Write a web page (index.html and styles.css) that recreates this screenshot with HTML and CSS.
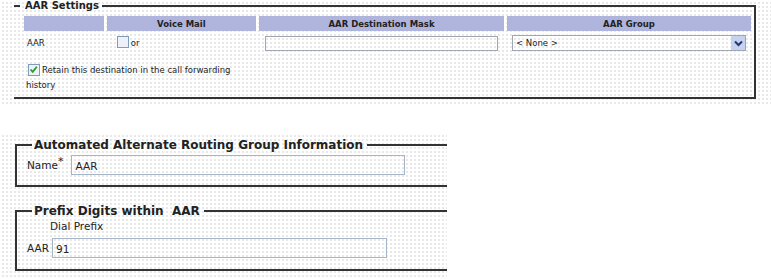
FILE: index.html
```html
<!DOCTYPE html>
<html lang="en">
<head>
    <meta charset="UTF-8">
    <title>AAR Settings</title>
    <link rel="stylesheet" href="styles.css">
</head>
<body>
    <div class="panel top">
        <fieldset class="aar">
            <legend>AAR Settings</legend>
            <table>
                <thead>
                    <tr>
                        <th class="c1"></th>
                        <th class="c2">Voice Mail</th>
                        <th class="c3">AAR Destination Mask</th>
                        <th class="c4">AAR Group</th>
                    </tr>
                </thead>
                <tbody>
                    <tr>
                        <td>AAR</td>
                        <td class="vm"><span class="box"></span>or</td>
                        <td><input type="text" class="mask"></td>
                        <td>
                            <div class="select">
                                <span>&lt; None &gt;</span>
                                <span class="arrow"><svg width="9" height="7" viewBox="0 0 9 7"><path d="M1 1.5 L4.5 5 L8 1.5" fill="none" stroke="#28346b" stroke-width="2"/></svg></span>
                            </div>
                        </td>
                    </tr>
                </tbody>
            </table>
            <div class="retain">
                <span class="box checked"><svg width="9" height="9" viewBox="0 0 9 9"><path d="M1.5 4.5 L3.7 6.8 L7.8 1.8" fill="none" stroke="#2f9a2f" stroke-width="1.8"/></svg></span>Retain this destination in the call forwarding history
            </div>
        </fieldset>
    </div>

    <div class="panel bottom">
        <fieldset class="group">
            <legend>Automated Alternate Routing Group Information</legend>
            <div class="row">
                <label>Name<sup>*</sup></label>
                <input type="text" class="name" value="AAR">
            </div>
        </fieldset>

        <fieldset class="prefix">
            <legend>Prefix Digits within &nbsp;AAR</legend>
            <div class="dial">Dial Prefix</div>
            <div class="row">
                <label>AAR</label>
                <input type="text" class="digits" value="91">
            </div>
        </fieldset>
    </div>
</body>
</html>
```

FILE: styles.css
```css
body{
    margin: 0;
    background: #fff;
    font-family: "DejaVu Sans", Verdana, sans-serif;
    color: #222;
}
.panel{
    background-color: #fff;
    background-image: radial-gradient(circle, #dcdcdc 0.6px, transparent 0.9px);
    background-size: 4px 4px;
    background-position: 1px 1px;
}
.top{
    width: 771px;
    height: 104px;
    padding-top: 2px;
    box-sizing: border-box;
}
.bottom{
    width: 447px;
    margin-top: 29px;
    height: 146px;
    padding-top: 7px;
    box-sizing: border-box;
}
fieldset{
    margin: 0;
    padding: 0;
    border: 2px solid #333;
    min-width: 0;
}
.aar{
    margin-left: 14px;
    width: 742px;
    height: 97px;
    box-sizing: border-box;
    border-left: none;
    padding: 0 0 0 7px;
}
.aar legend{
    font-size: 10px;
    font-weight: bold;
    margin-left: -1px;
    padding: 0 3px 0 5px;
    line-height: 8px;
}
table{
    border-collapse: separate;
    border-spacing: 3px 0;
    font-size: 8.5px;
    margin-top: 6px;
}
th{
    height: 15px;
    padding: 0;
    background-color: #b9bde3;
    background-image: radial-gradient(circle, #a5a9d6 0.6px, transparent 0.8px);
    background-size: 2px 2px;
    font-weight: bold;
}
.c1{ width: 80px; }
.c2{ width: 150px; }
.c3{ width: 245px; }
.c4{ width: 244px; }
td{
    padding: 0;
    height: 24px;
    vertical-align: middle;
}
td:first-child{
    padding-left: 3px;
}
.vm{
    padding-left: 10px;
}
.box{
    display: inline-block;
    width: 10px;
    height: 10px;
    border: 1px solid #7f9db9;
    background: #eef1f7;
    vertical-align: middle;
    margin-right: 2px;
    position: relative;
    top: -1px;
}
.box svg{
    display: block;
}
.retain .box{
    margin-left: 2px;
}
.mask{
    display: block;
    margin-left: 6px;
    width: 233px;
    height: 15px;
    box-sizing: border-box;
    border: 1px solid #a0a7b2;
    background: transparent;
    padding: 0;
}
.select{
    display: flex;
    justify-content: space-between;
    align-items: center;
    margin-left: 5px;
    width: 234px;
    height: 16px;
    box-sizing: border-box;
    border: 1px solid #a0a7b2;
    padding-left: 3px;
    font-size: 8.5px;
}
.arrow{
    width: 14px;
    height: 14px;
    background: #c6d3f0;
    display: flex;
    align-items: center;
    justify-content: center;
}
.retain{
    width: 205px;
    font-size: 8.5px;
    line-height: 15px;
    margin: 8px 0 0 5px;
}
.group, .prefix{
    margin-left: 15px;
    border-right: none;
    padding: 0 0 0 10px;
}
.group{
    height: 47px;
    box-sizing: border-box;
}
.prefix{
    margin-top: 19px;
    height: 65px;
    box-sizing: border-box;
}
.group legend, .prefix legend{
    font-size: 12px;
    font-weight: bold;
    line-height: 10px;
    margin-left: 5px;
    padding: 0 4px 0 2px;
    color: #222;
}
.row{
    display: flex;
    align-items: center;
    font-size: 10.5px;
}
.row label{
    margin-right: 8px;
}
sup{
    font-size: 11px;
    line-height: 0;
}
input.name, input.digits{
    height: 20px;
    box-sizing: border-box;
    border: 1px solid #a5b4c6;
    background: transparent;
    font-family: "DejaVu Sans", Verdana, sans-serif;
    font-size: 10.5px;
    padding: 2px 0 0 3px;
    color: #222;
}
.group .row{
    margin-top: 5px;
}
input.name{
    width: 334px;
}
.dial{
    font-size: 10.5px;
    padding-left: 23px;
    margin-top: 4px;
}
.prefix .row{
    margin-top: 6px;
}
.prefix .row label{
    margin-right: 3px;
}
input.digits{
    width: 335px;
}
```
